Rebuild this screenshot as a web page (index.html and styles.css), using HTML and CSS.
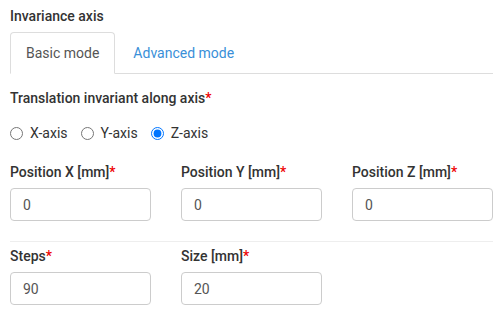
FILE: index.html
```html
<!DOCTYPE html>
<html lang="en">
<head>
  <meta charset="UTF-8">
  <title>Invariance axis</title>
  <link rel="stylesheet" href="styles.css">
</head>
<body>
  <div class="panel">
    <h4 class="title">Invariance axis</h4>

    <ul class="tabs">
      <li class="tab active">Basic mode</li>
      <li class="tab">Advanced mode</li>
    </ul>

    <div class="field">
      <label class="label">Translation invariant along axis<span class="req">*</span></label>
      <div class="radios">
        <label class="radio"><input type="radio" name="axis" value="x"> X-axis</label>
        <label class="radio"><input type="radio" name="axis" value="y"> Y-axis</label>
        <label class="radio"><input type="radio" name="axis" value="z" checked> Z-axis</label>
      </div>
    </div>

    <div class="row">
      <div class="col">
        <label class="label" for="posx">Position X [mm]<span class="req">*</span></label>
        <input class="input" id="posx" type="text" value="0">
      </div>
      <div class="col">
        <label class="label" for="posy">Position Y [mm]<span class="req">*</span></label>
        <input class="input" id="posy" type="text" value="0">
      </div>
      <div class="col">
        <label class="label" for="posz">Position Z [mm]<span class="req">*</span></label>
        <input class="input" id="posz" type="text" value="0">
      </div>
    </div>

    <hr class="sep">

    <div class="row">
      <div class="col">
        <label class="label" for="steps">Steps<span class="req">*</span></label>
        <input class="input" id="steps" type="text" value="90">
      </div>
      <div class="col">
        <label class="label" for="size">Size [mm]<span class="req">*</span></label>
        <input class="input" id="size" type="text" value="20">
      </div>
      <div class="col"></div>
    </div>
  </div>
</body>
</html>
```

FILE: styles.css
```css
* {
  margin: 0;
  padding: 0;
  box-sizing: border-box;
}

body {
  font-family: Roboto, "Liberation Sans", sans-serif;
  font-size: 14px;
  line-height: 20px;
  color: #333;
  background: #fff;
}

.panel {
  padding: 6px 6px 0 10px;
  width: 499px;
}

.title {
  font-size: 14px;
  font-weight: 500;
  color: #333;
  margin-bottom: 6px;
}

.tabs {
  list-style: none;
  display: flex;
  border-bottom: 1px solid #ddd;
  margin-bottom: 14px;
}

.tab {
  padding: 10px 15px;
  margin-right: 2px;
  margin-bottom: -1px;
  border: 1px solid transparent;
  border-radius: 4px 4px 0 0;
  color: #3a8fd8;
}

.tab.active {
  color: #555;
  border-color: #ddd;
  border-bottom-color: #fff;
  background: #fff;
}

.label {
  display: block;
  font-weight: 500;
  color: #333;
  margin-bottom: 6px;
}

.req {
  color: #e00;
}

.radios {
  display: flex;
  gap: 13px;
  margin-top: 15px;
  margin-bottom: 19px;
}

.radio {
  display: flex;
  align-items: center;
  gap: 7px;
  color: #333;
}

.radio input {
  width: 13px;
  height: 13px;
  margin: 0;
}

.row {
  display: flex;
  gap: 30px;
}

.col {
  width: 141px;
}

.input {
  display: block;
  width: 141px;
  height: 33px;
  padding: 6px 12px;
  border: 1px solid #ccc;
  border-radius: 4px;
  font-family: inherit;
  font-size: 14px;
  color: #555;
  background: #fff;
}

.sep {
  border: 0;
  border-top: 1px solid #eee;
  margin: 20px 0 4px;
  width: 483px;
}
```
